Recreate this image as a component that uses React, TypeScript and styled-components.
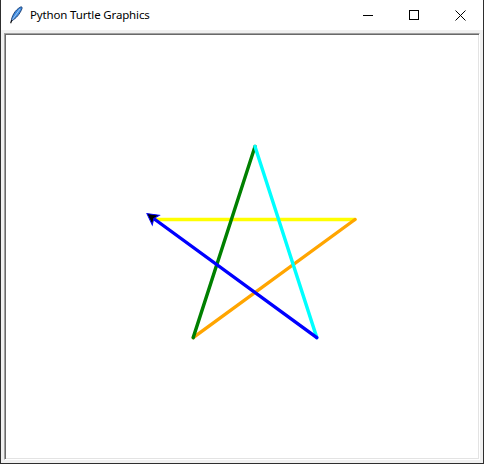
import styled, {createGlobalStyle} from "styled-components";

const GlobalStyle = createGlobalStyle`
  html, body {
    margin: 0;
    padding: 0;
    background: #ffffff;
  }
`

const Window = styled.div`
  width: 484px;
  height: 464px;
  box-sizing: border-box;
  display: flex;
  flex-direction: column;
  border: 1px solid #2e2e2e;
  border-top: none;
  background: #f0f0f0;
  overflow: hidden;
`

const TitleBar = styled.div`
  height: 30px;
  flex: 0 0 30px;
  display: flex;
  align-items: center;
  background: #ffffff;
  font-family: "Noto Sans", "Liberation Sans", sans-serif;
  font-size: 11.5px;
  color: #000000;
`

const AppIcon = styled.div`
  width: 16px;
  height: 18px;
  margin-left: 7px;
  margin-right: 6px;
  display: flex;
`

const Title = styled.span`
  flex: 1;
  white-space: nowrap;
  letter-spacing: -0.15px;
  padding-bottom: 1px;
`

const Controls = styled.div`
  display: flex;
  height: 100%;
`

const ControlButton = styled.div`
  width: 46px;
  height: 100%;
  display: flex;
  align-items: center;
  justify-content: center;
`

const ClientArea = styled.div`
  flex: 1;
  display: flex;
  padding: 3px;
`

const Canvas = styled.div`
  flex: 1;
  display: flex;
  background: #ffffff;
  border: 1px solid;
  border-color: #a0a0a0 #ffffff #ffffff #a0a0a0;
  box-shadow: inset 1px 1px 0 #696969, inset -1px -1px 0 #e3e3e3;
  padding: 1px;
`

const Drawing = styled.svg`
  flex: 1;
  display: block;
  width: 100%;
  height: 100%;
`

const Feather = () => (
    <svg width="16" height="18" viewBox="0 0 16 18">
        <path d="M3.2 15.5 C3.6 10.5 6.8 4 12.6 1 C13.8 0.5 14.4 1.4 14 2.6 C12 8 8 12.5 4.2 14.4 Z"
              fill="#3d8be0" stroke="#17386b" strokeWidth="0.9"/>
        <path d="M4.4 13.6 L12 3" stroke="#cfe3fa" strokeWidth="0.7"/>
        <path d="M2.6 17.2 L4 14" stroke="#111" strokeWidth="1.1"/>
    </svg>
)

const start = {x: 155, y: 219.5}
const colors = ["#ffff00", "#ffa500", "#008000", "#00ffff", "#0000ff"]

const starPoints = () => {
    const pts = [start]
    let heading = 0
    let {x, y} = start
    for (let i = 0; i < 5; i++) {
        x += 200 * Math.cos(heading * Math.PI / 180)
        y -= 201 * Math.sin(heading * Math.PI / 180)
        pts.push({x, y})
        heading -= 144
    }
    return pts
}

const App = () => {
    const pts = starPoints()
    return (<>
        <GlobalStyle/>
        <Window>
            <TitleBar>
                <AppIcon><Feather/></AppIcon>
                <Title>Python Turtle Graphics</Title>
                <Controls>
                    <ControlButton>
                        <svg width="10" height="10" viewBox="0 0 10 10">
                            <path d="M0 5.5 H10" stroke="#000" strokeWidth="1"/>
                        </svg>
                    </ControlButton>
                    <ControlButton>
                        <svg width="10" height="10" viewBox="0 0 10 10">
                            <rect x="0.5" y="0.5" width="9" height="9" fill="none" stroke="#000" strokeWidth="1"/>
                        </svg>
                    </ControlButton>
                    <ControlButton>
                        <svg width="11" height="11" viewBox="0 0 11 11">
                            <path d="M0.5 0.5 L10.5 10.5 M10.5 0.5 L0.5 10.5" stroke="#000" strokeWidth="1"/>
                        </svg>
                    </ControlButton>
                </Controls>
            </TitleBar>
            <ClientArea>
                <Canvas>
                    <Drawing viewBox="6 35 472 423" preserveAspectRatio="xMinYMin slice">
                        {colors.map((c, i) => (
                            <line key={c} x1={pts[i].x} y1={pts[i].y} x2={pts[i + 1].x} y2={pts[i + 1].y}
                                  stroke={c} strokeWidth="3.4" strokeLinecap="round"/>
                        ))}
                        <g transform={`translate(${start.x} ${start.y}) rotate(-144)`}>
                            <polygon points="10,0 -1,-6 1.5,0 -1,6" fill="#000" stroke="#0000ff"
                                     strokeWidth="1" strokeLinejoin="miter"/>
                        </g>
                    </Drawing>
                </Canvas>
            </ClientArea>
        </Window>
    </>)
}

export default App
